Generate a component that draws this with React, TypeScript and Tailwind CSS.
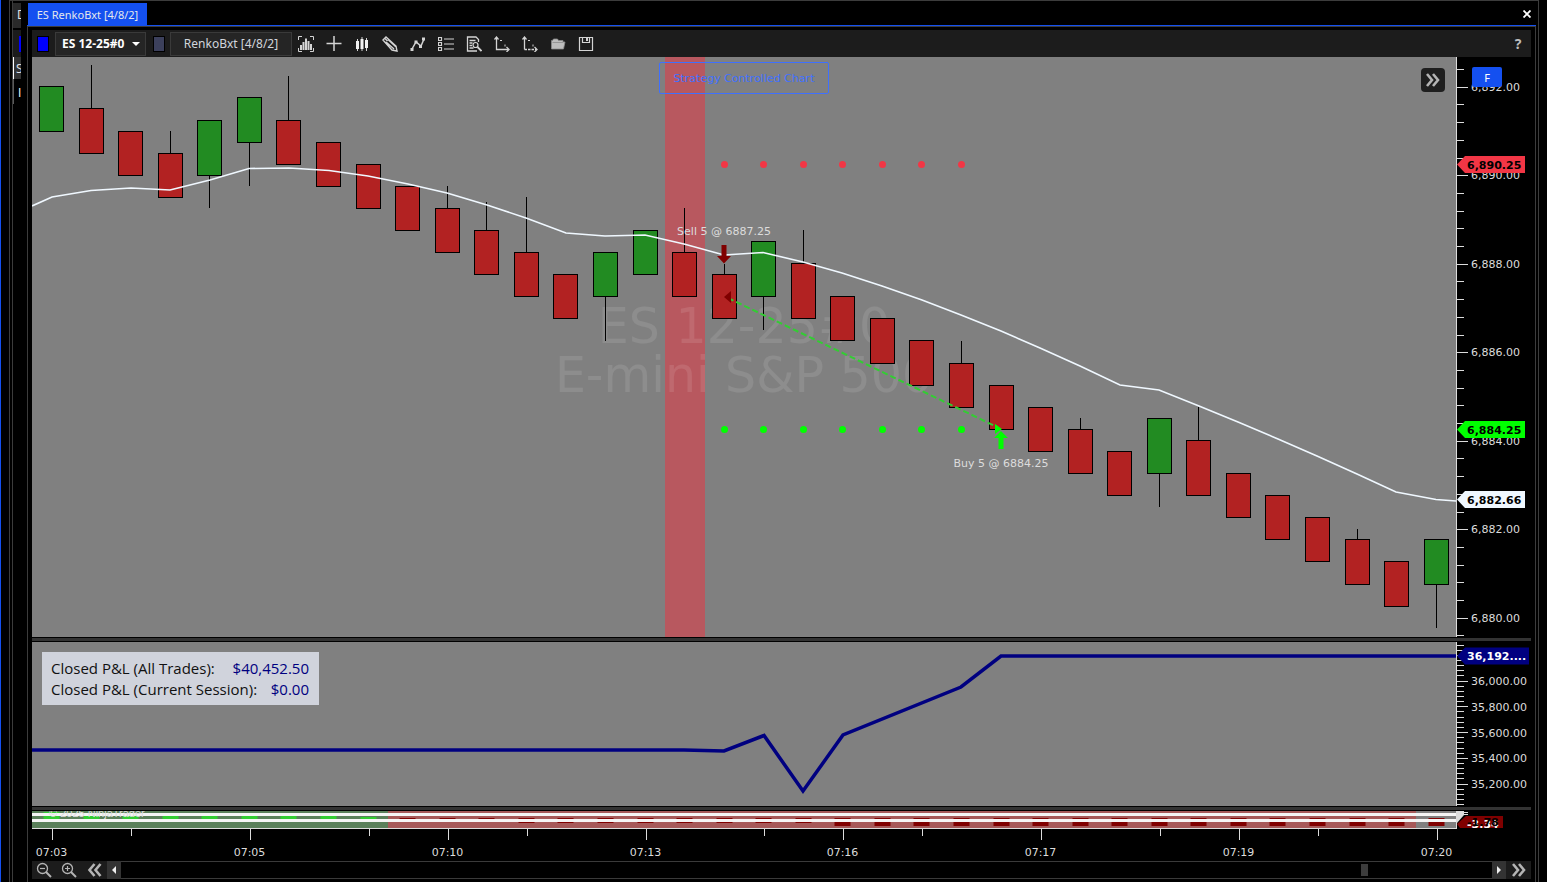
import React, { useState } from "react";

type Candle = { up?: boolean; top: number; bottom: number; high?: number; low?: number };

const CANDLES: Candle[] = [
    { up: true, top: 86, bottom: 131 },
    { top: 108, bottom: 153, high: 65 },
    { top: 131, bottom: 175 },
    { top: 153, bottom: 197, high: 131 },
    { up: true, top: 120, bottom: 175, low: 208 },
    { up: true, top: 97, bottom: 142, low: 186 },
    { top: 120, bottom: 164, high: 76 },
    { top: 142, bottom: 186 },
    { top: 164, bottom: 208 },
    { top: 186, bottom: 230 },
    { top: 208, bottom: 252, high: 186 },
    { top: 230, bottom: 274, high: 202 },
    { top: 252, bottom: 296, high: 197 },
    { top: 274, bottom: 318 },
    { up: true, top: 252, bottom: 296, low: 341 },
    { up: true, top: 230, bottom: 274 },
    { top: 252, bottom: 296, high: 208 },
    { top: 274, bottom: 318, high: 264 },
    { up: true, top: 241, bottom: 296, low: 330 },
    { top: 263, bottom: 318, high: 230 },
    { top: 296, bottom: 340 },
    { top: 318, bottom: 363 },
    { top: 340, bottom: 385 },
    { top: 363, bottom: 407, high: 341 },
    { top: 385, bottom: 429 },
    { top: 407, bottom: 451 },
    { top: 429, bottom: 473, high: 418 },
    { top: 451, bottom: 495 },
    { up: true, top: 418, bottom: 473, low: 507 },
    { top: 440, bottom: 495, high: 407 },
    { top: 473, bottom: 517 },
    { top: 495, bottom: 539 },
    { top: 517, bottom: 561 },
    { top: 539, bottom: 584, high: 529 },
    { top: 561, bottom: 606 },
    { up: true, top: 539, bottom: 584, low: 628 },
];

const AVERAGE =
    "32,206 52,197 91,190.5 131,188 170,190 210,180 249,168.5 289,168 329,170.5 368,176 408,184 447,193 487,205 526,218 566,233 605,236 645,235 684,244 724,255 763,252.5 803,262 842,273 882,286 922,300 961,315 1001,331 1040,348 1080,366 1120,385 1159,390 1199,406 1238,422 1278,439 1317,456 1357,474 1396,492 1436,499.5 1456,501";

const PRICES = ["6,892.00", "6,890.00", "6,888.00", "6,886.00", "6,884.00", "6,882.00", "6,880.00"];
const PROFITS = ["36,000.00", "35,800.00", "35,600.00", "35,400.00", "35,200.00"];

const TIMES = [
    { bar: 0, label: "07:03" },
    { bar: 5, label: "07:05" },
    { bar: 10, label: "07:10" },
    { bar: 15, label: "07:13" },
    { bar: 20, label: "07:16" },
    { bar: 25, label: "07:17" },
    { bar: 30, label: "07:19" },
    { bar: 35, label: "07:20" },
];
const MINOR_TIMES = [2, 8, 12, 18, 22, 28, 32];

const barX = (i: number) => Math.round(51.1 + i * 39.56) + 0.5;

function range(n: number) {
    return Array.from({ length: n }, (_, i) => i);
}

function Tag({ y, fill, color, text, right = 1525 }: { y: number; fill: string; color: string; text: string; right?: number }) {
    return (
        <g>
            <polygon points={`1457,${y} 1465,${y - 8.5} ${right},${y - 8.5} ${right},${y + 8.5} 1465,${y + 8.5}`} fill={fill} />
            <text x="1467" y={y + 4} fill={color} className="text-[11px] font-bold">
                {text}
            </text>
        </g>
    );
}

function PriceChart() {
    return (
        <svg viewBox="32 57 1499 580" className="block w-full font-['DejaVu_Sans',sans-serif]">
            <rect x="32" y="57" width="1424" height="580" fill="#808080" />
            <rect x="665" y="57" width="40" height="580" fill="#b8585f" />

            {/* Instrument watermark */}
            <g fill="#ffffff" fillOpacity="0.1" textAnchor="middle" className="text-[49px]">
                <text x="744" y="343">ES 12-25#0</text>
                <text x="744" y="392">E-mini S&amp;P 500</text>
            </g>

            {CANDLES.map((c, i) => (
                <g key={i} stroke="#000000" strokeWidth="1">
                    {c.high && <line x1={barX(i)} x2={barX(i)} y1={c.high} y2={c.top} />}
                    {c.low && <line x1={barX(i)} x2={barX(i)} y1={c.bottom} y2={c.low} />}
                    <rect
                        x={barX(i) - 12}
                        y={c.top + 0.5}
                        width="24"
                        height={c.bottom - c.top}
                        fill={c.up ? "#228b22" : "#b22222"}
                    />
                </g>
            ))}

            <polyline points={AVERAGE} fill="none" stroke="#f0f8ff" strokeWidth="1.6" />

            {/* Stop and target */}
            {range(7).map((i) => (
                <g key={i}>
                    <circle cx={barX(i + 17)} cy="164.5" r="3.5" fill="#f23645" />
                    <circle cx={barX(i + 17)} cy="429.5" r="3.5" fill="#00ff00" />
                </g>
            ))}

            {/* Executions */}
            <line x1="728" y1="298" x2="997" y2="427" stroke="#32cd32" strokeWidth="2" strokeDasharray="6 3" />
            <polygon points="724,297 731,291 731,303" fill="#800000" />
            <polygon points="995,424 1002,429 995,434" fill="#00ff00" />
            <polygon points="721.5,245 726.5,245 726.5,256 731,256 724,263.5 717,256 721.5,256" fill="#800000" />
            <polygon points="1001,431 1008,438 1003.5,438 1003.5,449 998.5,449 998.5,438 994,438" fill="#00ff00" />
            <g fill="#dcdcdc" textAnchor="middle" className="text-[11px]">
                <text x="724" y="235">Sell 5 @ 6887.25</text>
                <text x="1001" y="467">Buy 5 @ 6884.25</text>
            </g>

            {/* Price axis */}
            <rect x="1456" y="57" width="1" height="580" fill="#dcdcdc" />
            {range(33).map((i) => (
                <rect key={i} x="1457" y={Math.round(69 + i * 17.7)} width={i % 5 === 1 ? 11 : 7} height="1" fill="#dcdcdc" />
            ))}
            {PRICES.map((p, i) => (
                <text key={p} x="1471" y={Math.round(91 + i * 88.45)} fill="#dcdcdc" className="text-[11px]">
                    {p}
                </text>
            ))}
            <Tag y={164.5} fill="#f23645" color="#000000" text="6,890.25" />
            <Tag y={429.5} fill="#00ff00" color="#000000" text="6,884.25" />
            <Tag y={499.5} fill="#f0f8ff" color="#000000" text="6,882.66" />
        </svg>
    );
}

function ProfitChart() {
    return (
        <svg viewBox="32 642 1499 164" className="block w-full font-['DejaVu_Sans',sans-serif]">
            <rect x="32" y="642" width="1424" height="164" fill="#808080" />
            <polyline
                points="32,750 684,750 724,751 764,735.5 803,791 843,735 961,687 1001,656 1456,656"
                fill="none"
                stroke="#000080"
                strokeWidth="3.5"
            />
            <rect x="1456" y="642" width="1" height="164" fill="#dcdcdc" />
            {range(32).map((i) => (
                <rect key={i} x="1457" y={Math.round(644.5 + i * 5.15)} width={i % 5 === 2 ? 11 : 7} height="1" fill="#dcdcdc" />
            ))}
            {PROFITS.map((p, i) => (
                <text key={p} x="1471" y={Math.round(685 + i * 25.75)} fill="#dcdcdc" className="text-[11px]">
                    {p}
                </text>
            ))}
            <Tag y={656} fill="#000080" color="#ffffff" text="36,192...." right={1529} />
        </svg>
    );
}

function TimeChart() {
    return (
        <svg viewBox="32 811 1499 50" className="block w-full font-['DejaVu_Sans',sans-serif]">
            <rect x="32" y="811" width="356" height="17" fill="#5a805a" />
            <rect x="388" y="811" width="1028" height="17" fill="#a65959" />
            <rect x="1416" y="811" width="40" height="17" fill="#808080" />
            {range(9).map((i) => (
                <rect key={i} x={barX(i) - 8} y={i === 0 ? 812 : i === 8 ? 817 : 816} width="16" height={i === 0 ? 7 : 3} fill="#32cd32" />
            ))}
            {range(27).map((i) => (
                <rect key={i} x={barX(i + 9) - 8} y="818" width="16" height={i < 3 ? 1 : i < 11 ? 5 : 8} fill="#800000" />
            ))}
            <rect x="32" y="813" width="1424" height="3" fill="#f5f5f5" />
            <text x="49" y="817" fill="#dcdcdc" className="font-['Liberation_Sans',sans-serif] text-[11px]">© 2025 NinjaTrader</text>
            <rect x="32" y="819" width="1424" height="3" fill="#f5f5f5" />

            <polygon points="1456,811 1464,811 1464,815 1457,823 1457,829 1456,829" fill="#dcdcdc" />
            <rect x="1464" y="812" width="4" height="1" fill="#dcdcdc" />
            <rect x="1464" y="814" width="4" height="1" fill="#dcdcdc" />
            <polygon points="1457,824 1466,816 1503,816 1503,828 1460,828" fill="#800000" />
            <text x="1467" y="828" fill="#ffffff" className="text-[11px] font-bold">-3.34</text>
            <text x="1467" y="826" fill="#000000" className="text-[11px] font-bold">-1.78</text>

            {/* Time axis */}
            <rect x="32" y="828" width="1425" height="1" fill="#dcdcdc" />
            {MINOR_TIMES.map((bar) => (
                <rect key={bar} x={barX(bar) + 0.5} y="829" width="1" height="7" fill="#dcdcdc" />
            ))}
            {TIMES.map((t) => (
                <g key={t.label} fill="#dcdcdc">
                    <rect x={barX(t.bar) + 0.5} y="829" width="1" height="11" />
                    <text x={barX(t.bar)} y="856" textAnchor="middle" className="text-[11px]">
                        {t.label}
                    </text>
                </g>
            ))}
        </svg>
    );
}

const TOOLS: { name: string; icon: React.ReactNode }[] = [
    {
        name: "Bar type",
        icon: (
            <>
                <path d="M.5 4V.5H4M12 .5h3.5V4M.5 12v3.5H4M12 15.5h3.5V12" strokeWidth="1" />
                <path d="M3 14V9M5.5 14V6M8 14V2.5M10.5 14V5M13 14V8" strokeWidth="2" />
            </>
        ),
    },
    { name: "Crosshair", icon: <path d="M8 0v15M.5 7.5h15" strokeWidth="1.5" /> },
    {
        name: "Chart style",
        icon: (
            <>
                <path d="M3.5 3v12M8 1v14M12.5 2v13" strokeWidth="1" />
                <path d="M2 5h3v8H2zM6.5 3h3v10h-3zM11 4h3v8h-3z" fill="#f0f0f0" stroke="none" />
            </>
        ),
    },
    {
        name: "Drawing tools",
        icon: <path d="M1 4l3-3 10 9 1 5-5-1L1 4zM3 2.5L5.5 5M4 6l8 7M6 3.5l7.5 7" strokeWidth="1.4" />,
    },
    {
        name: "Indicators",
        icon: (
            <>
                <path d="M2 13l4-7 5 4 3-7" strokeWidth="1.5" />
                <path d="M.5 12h3v3h-3zM4.5 4.5h3v3h-3zM9 9h3v3H9zM12 1.5h3v3h-3z" fill="currentColor" stroke="none" />
            </>
        ),
    },
    {
        name: "Properties",
        icon: <path d="M.5 1.5h3v3h-3zM.5 6.5h3v3h-3zM.5 11.5h3v3h-3zM6 3h10M6 8h10M6 13h10" strokeWidth="1.2" />,
    },
    {
        name: "Data series",
        icon: (
            <>
                <path d="M12.5 6V3.5L10 1H1.5v14H11M3.5 4.5h6M3.5 7h3M3.5 9.5h2.5M3.5 12h4" strokeWidth="1.3" />
                <circle cx="9.5" cy="9" r="2.5" strokeWidth="1.2" />
                <path d="M11.5 11l4 4" strokeWidth="1.8" />
            </>
        ),
    },
    {
        name: "Horizontal scale",
        icon: (
            <>
                <path d="M2.5 2v11.5H14" strokeWidth="1.3" />
                <path d="M.5 3.5L2.5 1l2 2.5M12.5 11l2.500 2.5-2.500 2.500" strokeWidth="1.3" />
                <path d="M6 4.5h2M11 8.500v2" strokeWidth="1" />
            </>
        ),
    },
    {
        name: "Vertical scale",
        icon: (
            <>
                <path d="M2.5 2v11.5" strokeWidth="1.3" />
                <path d="M2.5 13.5H14" strokeWidth="1.3" strokeDasharray="2.5 1" />
                <path d="M.5 3.5L2.5 1l2 2.5M12.5 11l2.500 2.5-2.500 2.500" strokeWidth="1.3" />
                <path d="M6 4.5h2M11 8.500v2" strokeWidth="1" />
            </>
        ),
    },
    {
        name: "Templates",
        icon: <path d="M1.5 13V4.5h1l1-1.5h4l1 1.5H13V6h2l-1.5 7h-12zM2.5 6.5H13" fill="#bdbdbd" stroke="#8a8a8a" strokeWidth="0.8" />,
    },
    {
        name: "Save",
        icon: (
            <>
                <path d="M1.5 1.5h13v13h-13zM4.5 1.5v5h7v-5" strokeWidth="1.2" />
                <path d="M9 2v3" strokeWidth="2" />
            </>
        ),
    },
];

function Toolbar() {
    const [instrument, setInstrument] = useState("ES 12-25#0");

    return (
        <div className="flex h-[27px] items-center bg-[#1c1c1c] pl-[5px] font-['Noto_Sans','Open_Sans',sans-serif] text-xs text-gray-300">
            <button aria-label="Instrument link" className="h-4 w-3 border border-black bg-[#0000ff]" />
            <div className="relative ml-1.5">
                <select
                    aria-label="Instrument"
                    value={instrument}
                    onChange={(e) => setInstrument(e.target.value)}
                    className="block h-6 w-[91px] appearance-none border border-[#3a3a3a] bg-[#252525] pl-1.5 font-bold text-white"
                >
                    <option>ES 12-25#0</option>
                </select>
                <svg viewBox="0 0 8 4" className="pointer-events-none absolute top-2.5 right-1.5 h-1 w-2" fill="#ffffff">
                    <path d="M0 0h8L4 4z" />
                </svg>
            </div>
            <button aria-label="Interval link" className="ml-[7px] h-4 w-3 border border-black bg-[#3c405c]" />
            <button className="ml-[5px] h-6 w-[122px] border border-[#3a3a3a] bg-[#252525] pt-px">RenkoBxt [4/8/2]</button>
            {TOOLS.map((tool) => (
                <button key={tool.name} aria-label={tool.name} className="flex h-6 w-7 items-center justify-center text-[#d4d4d4]">
                    <svg viewBox="0 0 16 16" className="h-4 w-4" fill="none" stroke="currentColor">
                        {tool.icon}
                    </svg>
                </button>
            ))}
            <button aria-label="Help" className="mr-[7px] ml-auto w-3 text-sm font-bold text-[#bdbdbd]">
                ?
            </button>
        </div>
    );
}

function Chevrons({ left }: { left?: boolean }) {
    return (
        <svg viewBox="0 0 16 16" className="h-4 w-4" fill="none" stroke="#b4b4b4" strokeWidth="2.6">
            {left ? <path d="M7.5 2l-5 6 5 6M13.5 2l-5 6 5 6" /> : <path d="M2 2l5 6-5 6M8 2l5 6-5 6" />}
        </svg>
    );
}

function ZoomIcon({ plus }: { plus?: boolean }) {
    return (
        <svg viewBox="0 0 16 16" className="h-4 w-4" fill="none" stroke="#b4b4b4">
            <circle cx="6.5" cy="6.5" r="5" strokeWidth="1.3" />
            <path d={plus ? "M4 6.5h5M6.5 4v5" : "M4 6.5h5"} strokeWidth="1.2" />
            <path d="M10 10l5 5" strokeWidth="2" />
        </svg>
    );
}

function ScrollBar() {
    return (
        <div className="flex h-[18px] bg-[#1c1c1c]">
            <button aria-label="Zoom out" className="flex w-6 items-center justify-center">
                <ZoomIcon />
            </button>
            <button aria-label="Zoom in" className="flex w-[26px] items-center justify-center">
                <ZoomIcon plus />
            </button>
            <button aria-label="First bar" className="flex w-[25px] items-center justify-center">
                <Chevrons left />
            </button>
            <button aria-label="Scroll left" className="flex w-3.5 items-center justify-center bg-[#333333]">
                <svg viewBox="0 0 4 8" className="h-2 w-1" fill="#f0f0f0">
                    <path d="M4 0v8L0 4z" />
                </svg>
            </button>
            <div className="flex flex-1 items-center justify-end border-y border-[#3a3a3a] bg-black pr-[124px]">
                <div className="h-3 w-[7px] bg-[#3c3c3c]" />
            </div>
            <button aria-label="Scroll right" className="flex w-3.5 items-center justify-center bg-[#333333]">
                <svg viewBox="0 0 4 8" className="h-2 w-1" fill="#f0f0f0">
                    <path d="M0 0v8l4-4z" />
                </svg>
            </button>
            <button aria-label="Last bar" className="flex w-[25px] items-center justify-center">
                <Chevrons />
            </button>
        </div>
    );
}

// Sliver of the window that sits behind the chart
function BackWindow() {
    return (
        <div className="w-[17px] shrink-0 pl-0.5 font-['Open_Sans','Noto_Sans',sans-serif] text-xs text-gray-200">
            <div className="h-full border-l border-[#3c3c3c]">
                <div className="w-2 overflow-hidden pt-0.5">
                    <div className="h-[25px] bg-[#2a2a2a] pl-1 leading-6">D</div>
                    <div className="mt-0.5 flex h-[27px] items-center justify-end bg-[#1c1c1c]">
                        <span className="h-4 w-0.5 bg-[#0000ff]" />
                    </div>
                    <div className="h-[22px] border-l border-white bg-[#333333] pl-0.5 leading-6">S</div>
                    <div className="h-[25px] border-l border-[#5a5a5a] pl-1 leading-7 text-white">I</div>
                </div>
            </div>
        </div>
    );
}

export default function App() {
    return (
        <div className="flex min-h-screen bg-black">
            <div className="w-px bg-[#1450f0]" />
            <div className="mx-2 flex min-w-0 flex-1 border-x border-t border-[#3c3c3c]">
                <BackWindow />
                <div className="mr-0.5 flex min-w-0 flex-1 flex-col">
                    <header className="flex h-[25px] items-end justify-between border-b border-[#1450f0] px-px font-['Noto_Sans','Open_Sans',sans-serif]">
                        <div className="h-[22px] w-[119px] bg-[#1450f0] text-center text-[11px] leading-6 text-gray-200">
                            ES RenkoBxt [4/8/2]
                        </div>
                        <button aria-label="Close" className="flex h-[22px] w-4 items-center justify-center">
                            <svg viewBox="0 0 8 8" className="h-2 w-2" stroke="#ffffff" strokeWidth="1.8">
                                <path d="M.5.5l7 7M7.5.5l-7 7" />
                            </svg>
                        </button>
                    </header>

                    <main className="flex-1 border-x border-t border-[#3c3c3c] px-1 pt-[3px]">
                        <Toolbar />

                        <section className="relative">
                            <PriceChart />
                            <div className="pointer-events-none absolute top-[5px] right-[75px] left-0 flex justify-center">
                                <div className="h-8 w-[170px] rounded-xs border border-[#3f70ff] text-center font-['DejaVu_Sans',sans-serif] text-[11px] leading-[31px] text-[#3f70ff]">
                                    Strategy Controlled Chart
                                </div>
                            </div>
                            <button aria-label="Show panel" className="absolute top-[11px] right-[86px] flex h-6 w-6 items-center justify-center rounded bg-[#1f1f1f]">
                                <Chevrons />
                            </button>
                            <button className="absolute top-2.5 right-[29px] h-5 w-[30px] rounded-xs bg-[#1450f0] pt-0.5 font-['Noto_Sans',sans-serif] text-[11px] text-white">
                                F
                            </button>
                        </section>

                        <div className="h-[5px] border-y border-black bg-[#333333]" />

                        <section className="relative">
                            <ProfitChart />
                            <dl className="absolute top-2.5 left-2.5 w-[277px] bg-[#d0d3dc] pt-1.5 pr-2.5 pb-[5px] pl-[9px] font-['Open_Sans','Noto_Sans',sans-serif] text-[15px] leading-[21px] text-[#111111]">
                                <div className="flex justify-between">
                                    <dt>Closed P&amp;L (All Trades):</dt>
                                    <dd className="text-[#000080]">$40,452.50</dd>
                                </div>
                                <div className="flex justify-between">
                                    <dt>Closed P&amp;L (Current Session):</dt>
                                    <dd className="text-[#000080]">$0.00</dd>
                                </div>
                            </dl>
                        </section>

                        <div className="h-[5px] border-y border-black bg-[#333333]" />

                        <TimeChart />
                        <ScrollBar />
                    </main>
                </div>
            </div>
        </div>
    );
}
